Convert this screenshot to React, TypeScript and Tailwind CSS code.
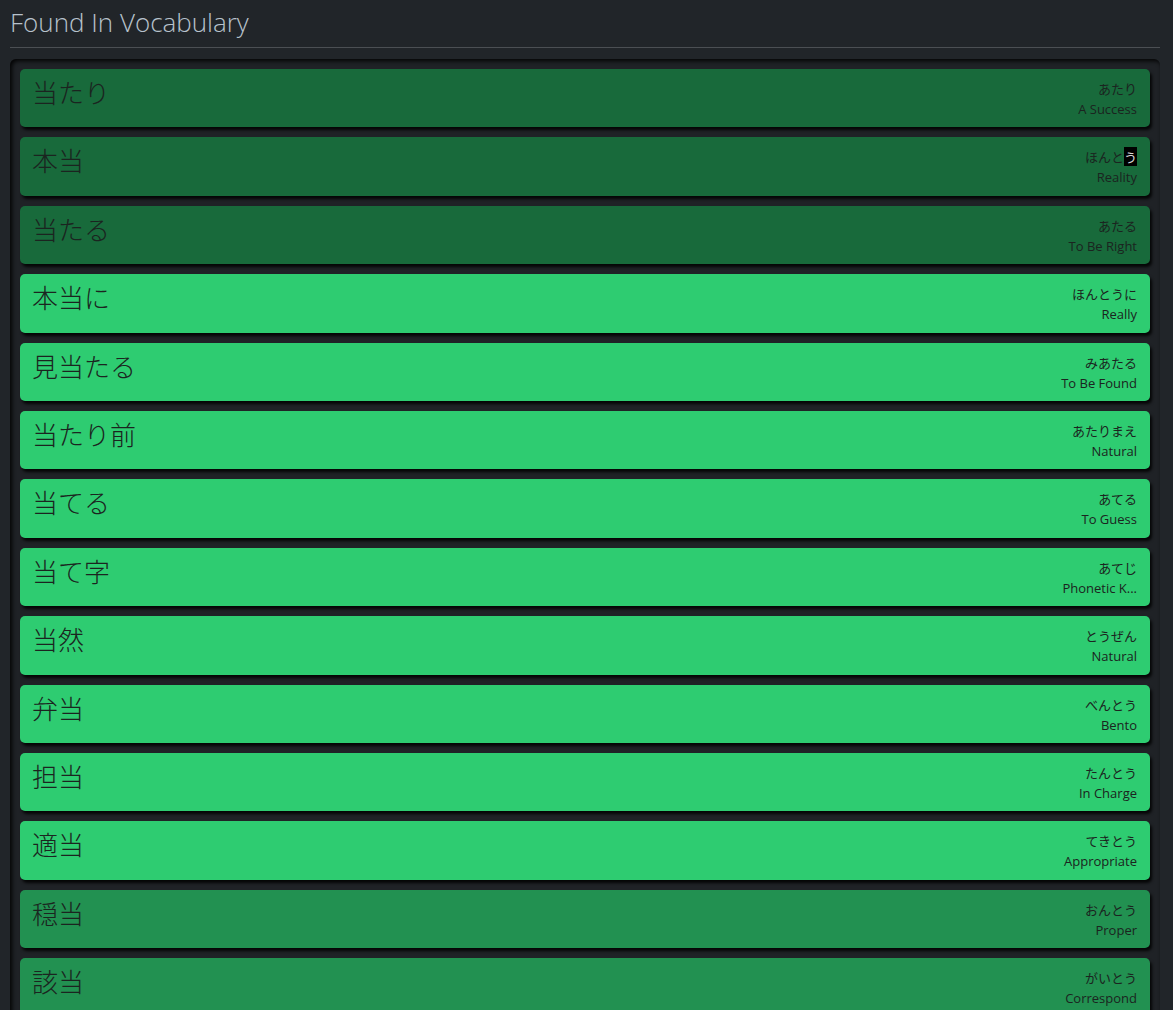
import React from 'react';

type Word = {
  word: string;
  kana: string;
  meaning: string;
  tone: 'dark' | 'bright' | 'mid';
  mark?: number; // index of kana char shown selected
};

const words: Word[] = [
  { word: '当たり', kana: 'あたり', meaning: 'A Success', tone: 'dark' },
  { word: '本当', kana: 'ほんとう', meaning: 'Reality', tone: 'dark', mark: 3 },
  { word: '当たる', kana: 'あたる', meaning: 'To Be Right', tone: 'dark' },
  { word: '本当に', kana: 'ほんとうに', meaning: 'Really', tone: 'bright' },
  { word: '見当たる', kana: 'みあたる', meaning: 'To Be Found', tone: 'bright' },
  { word: '当たり前', kana: 'あたりまえ', meaning: 'Natural', tone: 'bright' },
  { word: '当てる', kana: 'あてる', meaning: 'To Guess', tone: 'bright' },
  { word: '当て字', kana: 'あてじ', meaning: 'Phonetic K...', tone: 'bright' },
  { word: '当然', kana: 'とうぜん', meaning: 'Natural', tone: 'bright' },
  { word: '弁当', kana: 'べんとう', meaning: 'Bento', tone: 'bright' },
  { word: '担当', kana: 'たんとう', meaning: 'In Charge', tone: 'bright' },
  { word: '適当', kana: 'てきとう', meaning: 'Appropriate', tone: 'bright' },
  { word: '穏当', kana: 'おんとう', meaning: 'Proper', tone: 'mid' },
  { word: '該当', kana: 'がいとう', meaning: 'Correspond', tone: 'mid' },
];

const toneClass = {
  dark: 'bg-[#186a3b]',
  bright: 'bg-[#2ecc71]',
  mid: 'bg-[#229151]',
};

const jp = "font-['Noto_Sans_CJK_JP',sans-serif]";

function Card({ w }: { w: Word }) {
  return (
    <div
      className={`${toneClass[w.tone]} h-[58.4px] rounded-[5px] shadow-[2px_3px_3px_rgba(0,0,0,0.85)] flex justify-between pl-3 pr-[13px] text-[#1b2420]`}
    >
      <div className={`${jp} text-[26px] leading-[31px] pt-[7px] font-light`}>{w.word}</div>
      <div className="flex flex-col items-end pt-[10px]">
        <div className={`${jp} text-[13px] leading-[20px]`}>
          {w.mark === undefined ? (
            w.kana
          ) : (
            <>
              {w.kana.slice(0, w.mark)}
              <span className="bg-black text-[#d8d8d8]">{w.kana.slice(w.mark, w.mark + 1)}</span>
              {w.kana.slice(w.mark + 1)}
            </>
          )}
        </div>
        <div className="font-['Open_Sans',sans-serif] text-[13px] leading-[20px]">{w.meaning}</div>
      </div>
    </div>
  );
}

export default function App() {
  return (
    <div className="min-h-screen bg-[#212529] pl-[10px] pr-[13px] overflow-hidden">
      <h2 className="font-['Open_Sans',sans-serif] font-light text-[26px] leading-[44px] text-[#b7c2cc] pb-[3px] border-b border-[#4b4f53]">
        Found In Vocabulary
      </h2>
      <div className="mt-[11px] rounded-[6px] bg-[#1f2226] shadow-[inset_2px_2px_4px_rgba(0,0,0,0.9)] p-[10px] flex flex-col gap-[10px]">
        {words.map((w) => (
          <Card key={w.word} w={w} />
        ))}
      </div>
    </div>
  );
}
